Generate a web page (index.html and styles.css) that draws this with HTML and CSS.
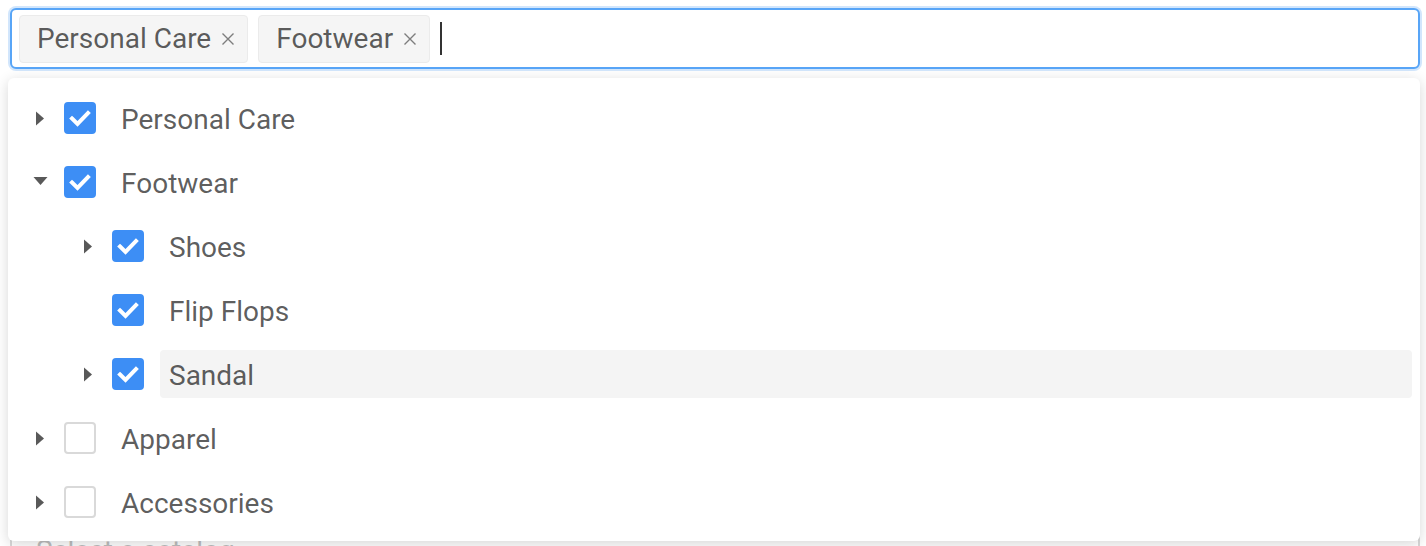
FILE: index.html
```html
<!DOCTYPE html>
<html>
<head>
<meta charset="utf-8">
<link rel="stylesheet" href="styles.css">
</head>
<body>
<div class="page">
  <div class="select focused">
    <span class="tag">Personal Care<svg class="tag-close" viewBox="0 0 14 14"><path d="M1.5 1.5 L12.5 12.5 M12.5 1.5 L1.5 12.5"/></svg></span>
    <span class="tag">Footwear<svg class="tag-close" viewBox="0 0 14 14"><path d="M1.5 1.5 L12.5 12.5 M12.5 1.5 L1.5 12.5"/></svg></span>
    <span class="cursor"></span>
  </div>
  <div class="select second">
    <span class="placeholder">Select a catalog</span>
  </div>

  <div class="dropdown">
    <ul class="tree">
      <li class="node">
        <span class="switcher"><svg class="caret" viewBox="0 0 10 14"><path d="M1 0 L9 7 L1 14 Z"/></svg></span>
        <span class="checkbox checked"><svg viewBox="0 0 32 32"><path d="M8 16.5 L13.5 22 L24 11"/></svg></span>
        <span class="label">Personal Care</span>
      </li>
      <li class="node">
        <span class="switcher"><svg class="caret down" viewBox="0 0 14 10"><path d="M0 1 L14 1 L7 9 Z"/></svg></span>
        <span class="checkbox checked"><svg viewBox="0 0 32 32"><path d="M8 16.5 L13.5 22 L24 11"/></svg></span>
        <span class="label">Footwear</span>
      </li>
      <li class="node level2">
        <span class="switcher"><svg class="caret" viewBox="0 0 10 14"><path d="M1 0 L9 7 L1 14 Z"/></svg></span>
        <span class="checkbox checked"><svg viewBox="0 0 32 32"><path d="M8 16.5 L13.5 22 L24 11"/></svg></span>
        <span class="label">Shoes</span>
      </li>
      <li class="node level2">
        <span class="switcher"></span>
        <span class="checkbox checked"><svg viewBox="0 0 32 32"><path d="M8 16.5 L13.5 22 L24 11"/></svg></span>
        <span class="label">Flip Flops</span>
      </li>
      <li class="node level2">
        <span class="switcher"><svg class="caret" viewBox="0 0 10 14"><path d="M1 0 L9 7 L1 14 Z"/></svg></span>
        <span class="checkbox checked"><svg viewBox="0 0 32 32"><path d="M8 16.5 L13.5 22 L24 11"/></svg></span>
        <span class="label hover">Sandal</span>
      </li>
      <li class="node">
        <span class="switcher"><svg class="caret" viewBox="0 0 10 14"><path d="M1 0 L9 7 L1 14 Z"/></svg></span>
        <span class="checkbox"></span>
        <span class="label">Apparel</span>
      </li>
      <li class="node">
        <span class="switcher"><svg class="caret" viewBox="0 0 10 14"><path d="M1 0 L9 7 L1 14 Z"/></svg></span>
        <span class="checkbox"></span>
        <span class="label">Accessories</span>
      </li>
    </ul>
  </div>
</div>
</body>
</html>
```

FILE: styles.css
```css
* { box-sizing: border-box; }
html, body {
  margin: 0;
  padding: 0;
  background: #ffffff;
  height: 100%;
  overflow: hidden;
}
body {
  font-family: Roboto, "Liberation Sans", Arial, sans-serif;
  font-size: 28px;
  color: rgba(0, 0, 0, 0.65);
}
.page {
  position: relative;
  padding: 8px 6px 0 10px;
}
.select {
  display: flex;
  align-items: center;
  height: 61px;
  border: 2px solid #d9d9d9;
  border-radius: 6px;
  padding: 0 7px;
  background: #fff;
}
.select.focused {
  border-color: #58a5f7;
  box-shadow: 0 0 0 2px #d2e6fc;
}
.select.second {
  margin-top: 451px;
}
.placeholder {
  color: #bfbfbf;
  padding-left: 17px;
  line-height: 1;
}
.tag {
  display: inline-flex;
  align-items: center;
  height: 48px;
  padding: 1px 12px 0 17px;
  margin-right: 10px;
  background: #f5f5f5;
  border: 1px solid #ebebeb;
  border-radius: 4px;
  color: rgba(0, 0, 0, 0.65);
  line-height: 1;
}
.tag-close {
  width: 14px;
  height: 14px;
  margin-left: 10px;
  fill: none;
  stroke: #7d7d7d;
  stroke-width: 1.4;
}
.cursor {
  display: inline-block;
  width: 2px;
  height: 33px;
  background: #333;
}
.dropdown {
  position: absolute;
  top: 78px;
  left: 8px;
  width: 1412px;
  height: 463px;
  background: #fff;
  border-radius: 6px;
  box-shadow: 0 3px 14px rgba(0, 0, 0, 0.16);
  padding: 8px;
}
.tree {
  list-style: none;
  margin: 0;
  padding: 0;
}
.node {
  display: flex;
  align-items: center;
  height: 64px;
}
.node.level2 {
  padding-left: 48px;
}
.switcher {
  flex: none;
  width: 48px;
  height: 48px;
  display: flex;
  align-items: center;
  justify-content: center;
}
.caret {
  width: 10px;
  height: 15px;
  fill: #595959;
}
.caret.down {
  width: 15px;
  height: 10px;
  margin-top: -2px;
}
.checkbox {
  flex: none;
  width: 32px;
  height: 32px;
  border: 2px solid #d9d9d9;
  border-radius: 4px;
  background: #fff;
  margin-right: 16px;
  display: flex;
  align-items: center;
  justify-content: center;
}
.checkbox.checked {
  background: #3d8ef5;
  border-color: #3d8ef5;
}
.checkbox svg {
  width: 32px;
  height: 32px;
  flex: none;
  fill: none;
  stroke: #fff;
  stroke-width: 4;
  stroke-linecap: square;
  stroke-linejoin: miter;
}
.label {
  flex: none;
  height: 48px;
  display: flex;
  align-items: center;
  padding: 3px 9px 0;
  border-radius: 4px;
  line-height: 1;
}
.label.hover {
  flex: 1;
  background: #f4f4f4;
}
```
